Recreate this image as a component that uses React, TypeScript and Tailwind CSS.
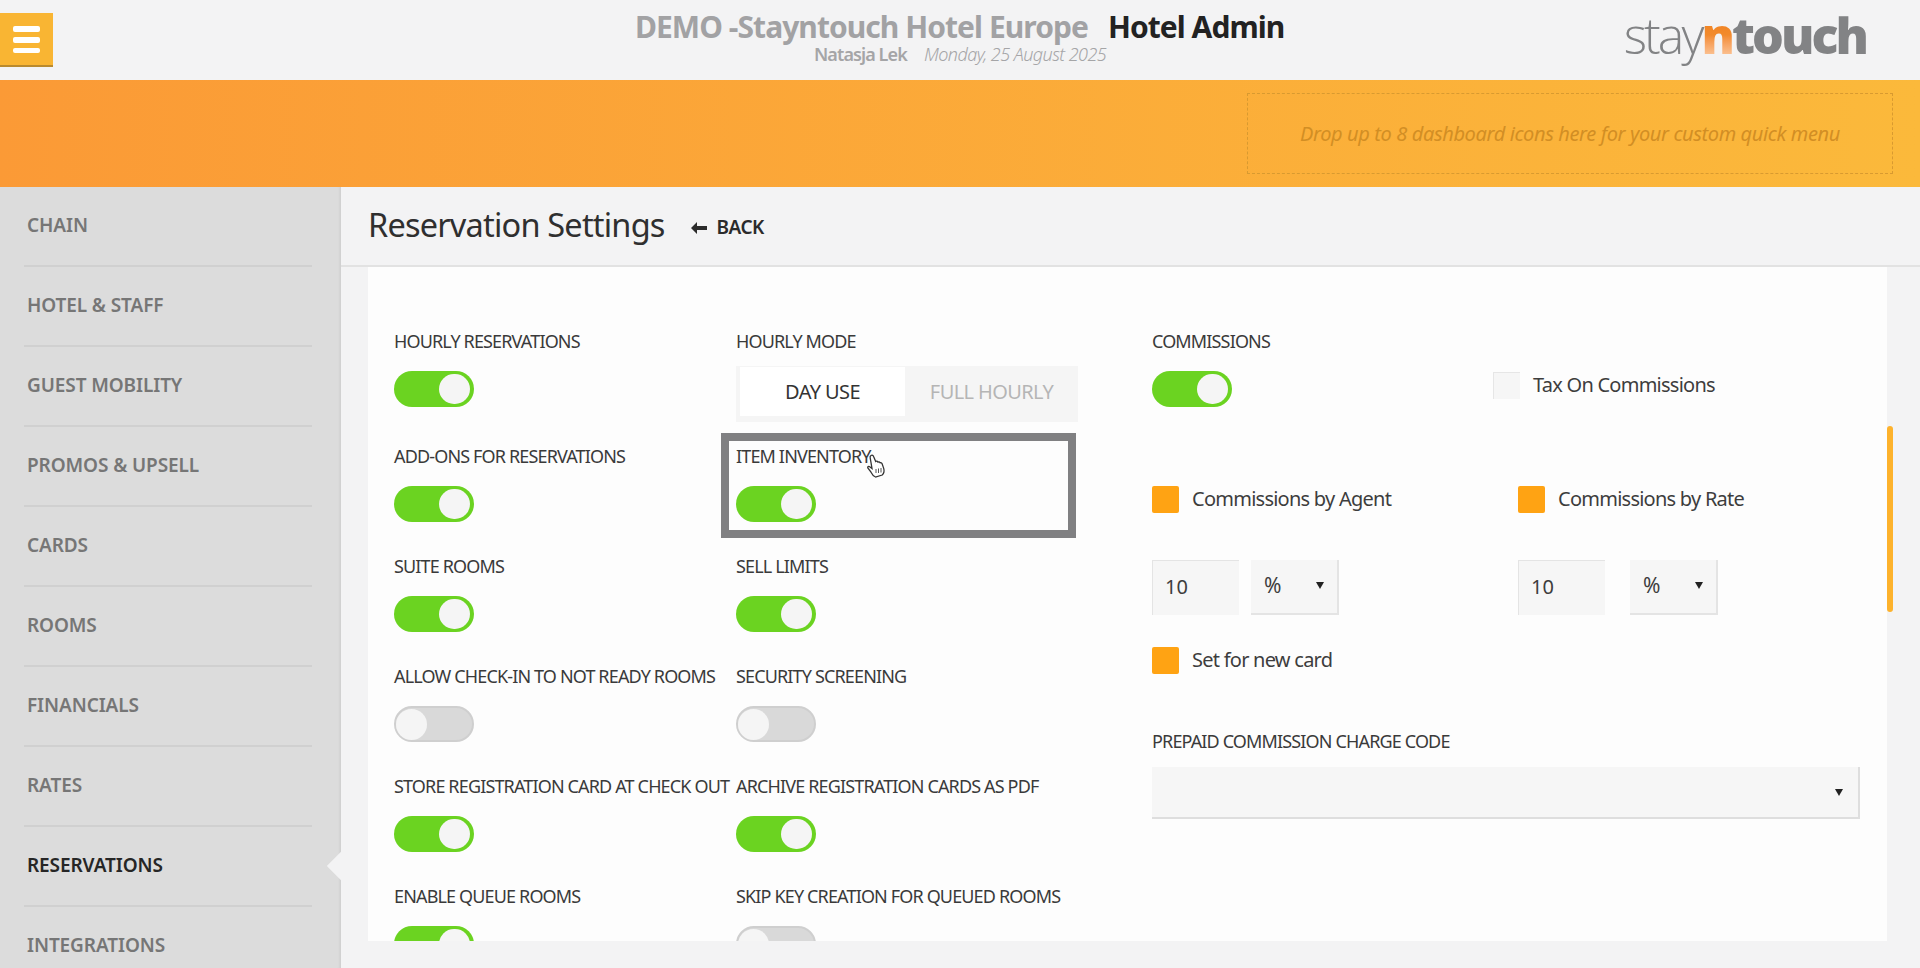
const nav = ["CHAIN", "HOTEL & STAFF", "GUEST MOBILITY", "PROMOS & UPSELL", "CARDS", "ROOMS", "FINANCIALS", "RATES", "RESERVATIONS", "INTEGRATIONS"];

const Toggle = ({ on = true }: { on?: boolean }) =>
  on ? (
    <div className="flex h-9 w-20 items-center justify-end rounded-full bg-[#6bd321] pr-1">
      <div className="h-[30px] w-[31px] rounded-full bg-[#f5f5f5]" />
    </div>
  ) : (
    <div className="flex h-9 w-20 items-center rounded-full border-2 border-[#cfcfcf] bg-[#d9d9d9]">
      <div className="h-[31px] w-[31px] rounded-full bg-[#f5f5f5]" />
    </div>
  );

const Field = ({ label, on = true, className = "mb-8" }: { label: string; on?: boolean; className?: string }) => (
  <div className={className}>
    <div className="mb-[18px] h-6 whitespace-nowrap text-[18px] leading-6 tracking-[-0.85px] text-[#3a3a3a]">{label}</div>
    <Toggle on={on} />
  </div>
);

const Check = ({ label, on = true }: { label: string; on?: boolean }) => (
  <div className="flex h-[27px] items-center gap-[13px]">
    <div className={on ? "h-[27px] w-[27px] rounded-[2px] bg-[#ffa313]" : "h-[27px] w-[27px] border-l border-t border-[#e6e6e6] bg-[#f6f6f6]"} />
    <span className="pb-[2px] text-[20px] tracking-[-0.75px] text-[#3d3d3d]">{label}</span>
  </div>
);

const Caret = () => (
  <svg width="8" height="7" viewBox="0 0 8 7" className="shrink-0">
    <path d="M0 0h8L4 7z" fill="#222" />
  </svg>
);

const Amount = ({ gap }: { gap: string }) => (
  <div className={`flex ${gap}`}>
    <div className="flex h-[55px] w-[87px] items-center border-l border-t border-[#e4e4e4] bg-[#f6f6f6] pb-[2px] pl-3 text-[20px] text-[#3d3d3d]">10</div>
    <div className="flex h-[55px] w-[88px] items-center justify-between border-b-2 border-r-2 border-[#e4e4e4] bg-[#f6f6f6] pb-[2px] pl-[13px] pr-[13px] text-[21px] text-[#3d3d3d]">
      %
      <Caret />
    </div>
  </div>
);

export default function App() {
  return (
    <div className="flex h-[968px] w-[1920px] flex-col overflow-hidden bg-[#f3f3f4] font-['Noto_Sans',sans-serif]">
      <header className="relative flex h-20 shrink-0 items-center justify-between pr-[54px]">
        <div className="flex h-[54px] w-[53px] flex-col justify-center gap-[5px] border-b-2 border-[#b98a2e] bg-[#f9b533] pl-[13px]">
          <div className="h-[6px] w-[27px] rounded-[2px] bg-white" />
          <div className="h-[6px] w-[27px] rounded-[2px] bg-white" />
          <div className="h-[5px] w-[27px] rounded-[2px] bg-white" />
        </div>
        <div className="absolute left-[635px] top-2">
          <div className="flex h-[37px] items-center gap-[20px] whitespace-nowrap text-[30px] font-bold leading-none tracking-[-0.95px]">
            <span className="text-[#a2a2a4]">DEMO -Stayntouch Hotel Europe</span>
            <span className="text-[#222]">Hotel Admin</span>
          </div>
          <div className="ml-[179px] flex h-[18px] items-center gap-[17px] whitespace-nowrap text-[18px] leading-none tracking-[-0.9px]">
            <span className="font-semibold text-[#a5a5a7]">Natasja Lek</span>
            <span className="font-light italic tracking-[-0.55px] text-[#a5a5a7]">Monday, 25 August 2025</span>
          </div>
        </div>
        <div className="mb-[10px] whitespace-nowrap font-['Open_Sans',sans-serif] text-[50px] leading-none tracking-[-2.95px] text-[#828385]">
          <span className="font-light">stay</span>
          <span className="bg-gradient-to-b from-[#ee7a14] via-[#f28a2c] to-[#fde6cc] bg-clip-text font-extrabold text-transparent">n</span>
          <span className="font-extrabold">touch</span>
        </div>
      </header>

      <div className="flex h-[107px] shrink-0 items-center justify-end bg-gradient-to-r from-[#fb9a36] to-[#fbb93b] pr-[27px]">
        <div className="flex h-[81px] w-[646px] items-center justify-center border border-dashed border-[#d89a30] text-[20px] italic tracking-[-0.38px] text-[#d28e24]">
          Drop up to 8 dashboard icons here for your custom quick menu
        </div>
      </div>

      <div className="flex min-h-0 flex-1">
        <nav className="relative w-[341px] shrink-0 overflow-hidden bg-[#dcdcdc] shadow-[inset_-3px_0_3px_-2px_rgba(0,0,0,0.08)]">
          <ul className="pl-6">
            {nav.map((item) => (
              <li key={item} className="flex h-20 w-[288px] items-center border-b-2 border-[#d0d0d0] pb-[2px] pl-[3px] text-[19px] font-semibold tracking-[-0.1px]">
                <span className={item === "RESERVATIONS" ? "text-[#262626]" : "text-[#767676]"}>{item}</span>
              </li>
            ))}
          </ul>
          <div className="absolute right-0 top-[669px] h-5 w-5 translate-x-[10px] rotate-45 bg-[#f3f3f4]" />
        </nav>

        <main className="flex min-w-0 flex-1 flex-col">
          <div className="flex h-[80px] shrink-0 items-center border-b-2 border-[#e2e2e2] pl-[27px]">
            <h1 className="pb-[2px] text-[32.5px] tracking-[-0.8px] text-[#2f2f2f]">Reservation Settings</h1>
            <div className="ml-[26px] mt-[3px] flex items-center gap-[10px] text-[19px] font-semibold tracking-[-0.5px] text-[#2b2b2b]">
              <svg width="16" height="12" viewBox="0 0 16 12">
                <path d="M6 0v4h10v4H6v4L0 6z" fill="#2b2b2b" />
              </svg>
              BACK
            </div>
          </div>

          <div className="relative flex min-h-0 flex-1 pb-[27px] pr-[33px]">
            <section className="ml-[27px] flex flex-1 overflow-hidden bg-[#fdfdfd] pl-[26px] pt-[62px]">
              <div className="grid w-[758px] shrink-0 grid-cols-[342px_1fr] content-start">
                <Field label="HOURLY RESERVATIONS" className="mb-[37px]" />
                <div>
                  <div className="mb-[13px] h-6 text-[18px] leading-6 tracking-[-0.85px] text-[#3a3a3a]">HOURLY MODE</div>
                  <div className="flex h-14 w-[342px] bg-[#f5f5f5] pb-[6px] pl-[4px] pt-[1px] text-[20px] tracking-[-0.6px]">
                    <div className="flex w-[165px] items-center justify-center bg-white text-[#333]">DAY USE</div>
                    <div className="flex flex-1 items-center justify-center text-[#b5b5b5]">FULL HOURLY</div>
                  </div>
                </div>
                <Field label="ADD-ONS FOR RESERVATIONS" />
                <div className="relative">
                  <Field label="ITEM INVENTORY" />
                  <div className="absolute -left-[15px] -top-[11px] h-[105px] w-[355px] border-8 border-[#808082]" />
                  <svg width="22" height="24" viewBox="0 0 22 24" className="absolute left-[130px] top-[10px]">
                    <path d="M5 1.5c1.2-.7 2.3 0 2.7 1.2l2 4.8c.8-.6 1.8-.3 2.3.6.8-.4 1.7-.1 2.1.7.9-.3 1.7.2 2 1l1.6 4.600c.8 2.600.2 5-1.500 6.600l-6.700 2c-1.800-.6-3.500-2.800-4.500-4.800L1.800 14c-.5-1.100.8-2.100 1.900-1.300l2.300 1.800L4.200 3.900C3.900 2.900 4.200 2 5 1.500z" fill="#fff" stroke="#333" strokeWidth="1.3" />
                    <path d="M10 15v4M12.500 14.500v4.500M15 14v4.500" stroke="#555" strokeWidth="1" />
                  </svg>
                </div>
                <Field label="SUITE ROOMS" />
                <Field label="SELL LIMITS" />
                <Field label="ALLOW CHECK-IN TO NOT READY ROOMS" on={false} />
                <Field label="SECURITY SCREENING" on={false} />
                <Field label="STORE REGISTRATION CARD AT CHECK OUT" />
                <Field label="ARCHIVE REGISTRATION CARDS AS PDF" />
                <Field label="ENABLE QUEUE ROOMS" />
                <Field label="SKIP KEY CREATION FOR QUEUED ROOMS" on={false} />
              </div>

              <div className="w-[708px] shrink-0">
                <div className="mb-[18px] h-6 text-[18px] leading-6 tracking-[-0.85px] text-[#3a3a3a]">COMMISSIONS</div>
                <div className="flex">
                  <Toggle />
                  <div className="ml-[261px] mt-px">
                    <Check label="Tax On Commissions" on={false} />
                  </div>
                </div>
                <div className="mt-[79px] grid grid-cols-[366px_1fr]">
                  <Check label="Commissions by Agent" />
                  <Check label="Commissions by Rate" />
                </div>
                <div className="mt-[47px] grid grid-cols-[366px_1fr]">
                  <Amount gap="gap-3" />
                  <Amount gap="gap-[25px]" />
                </div>
                <div className="mt-8">
                  <Check label="Set for new card" />
                </div>
                <div className="mt-[55px] h-6 text-[18px] leading-6 tracking-[-0.85px] text-[#3a3a3a]">PREPAID COMMISSION CHARGE CODE</div>
                <div className="mt-[14px] flex h-[52px] items-center justify-end border-b-2 border-r-2 border-[#dedede] bg-[#f6f6f6] pr-[15px]">
                  <Caret />
                </div>
              </div>
            </section>
            <div className="absolute right-[27px] top-[159px] h-[186px] w-[6px] rounded-full bg-[#fdb22c]" />
          </div>
        </main>
      </div>
    </div>
  );
}
